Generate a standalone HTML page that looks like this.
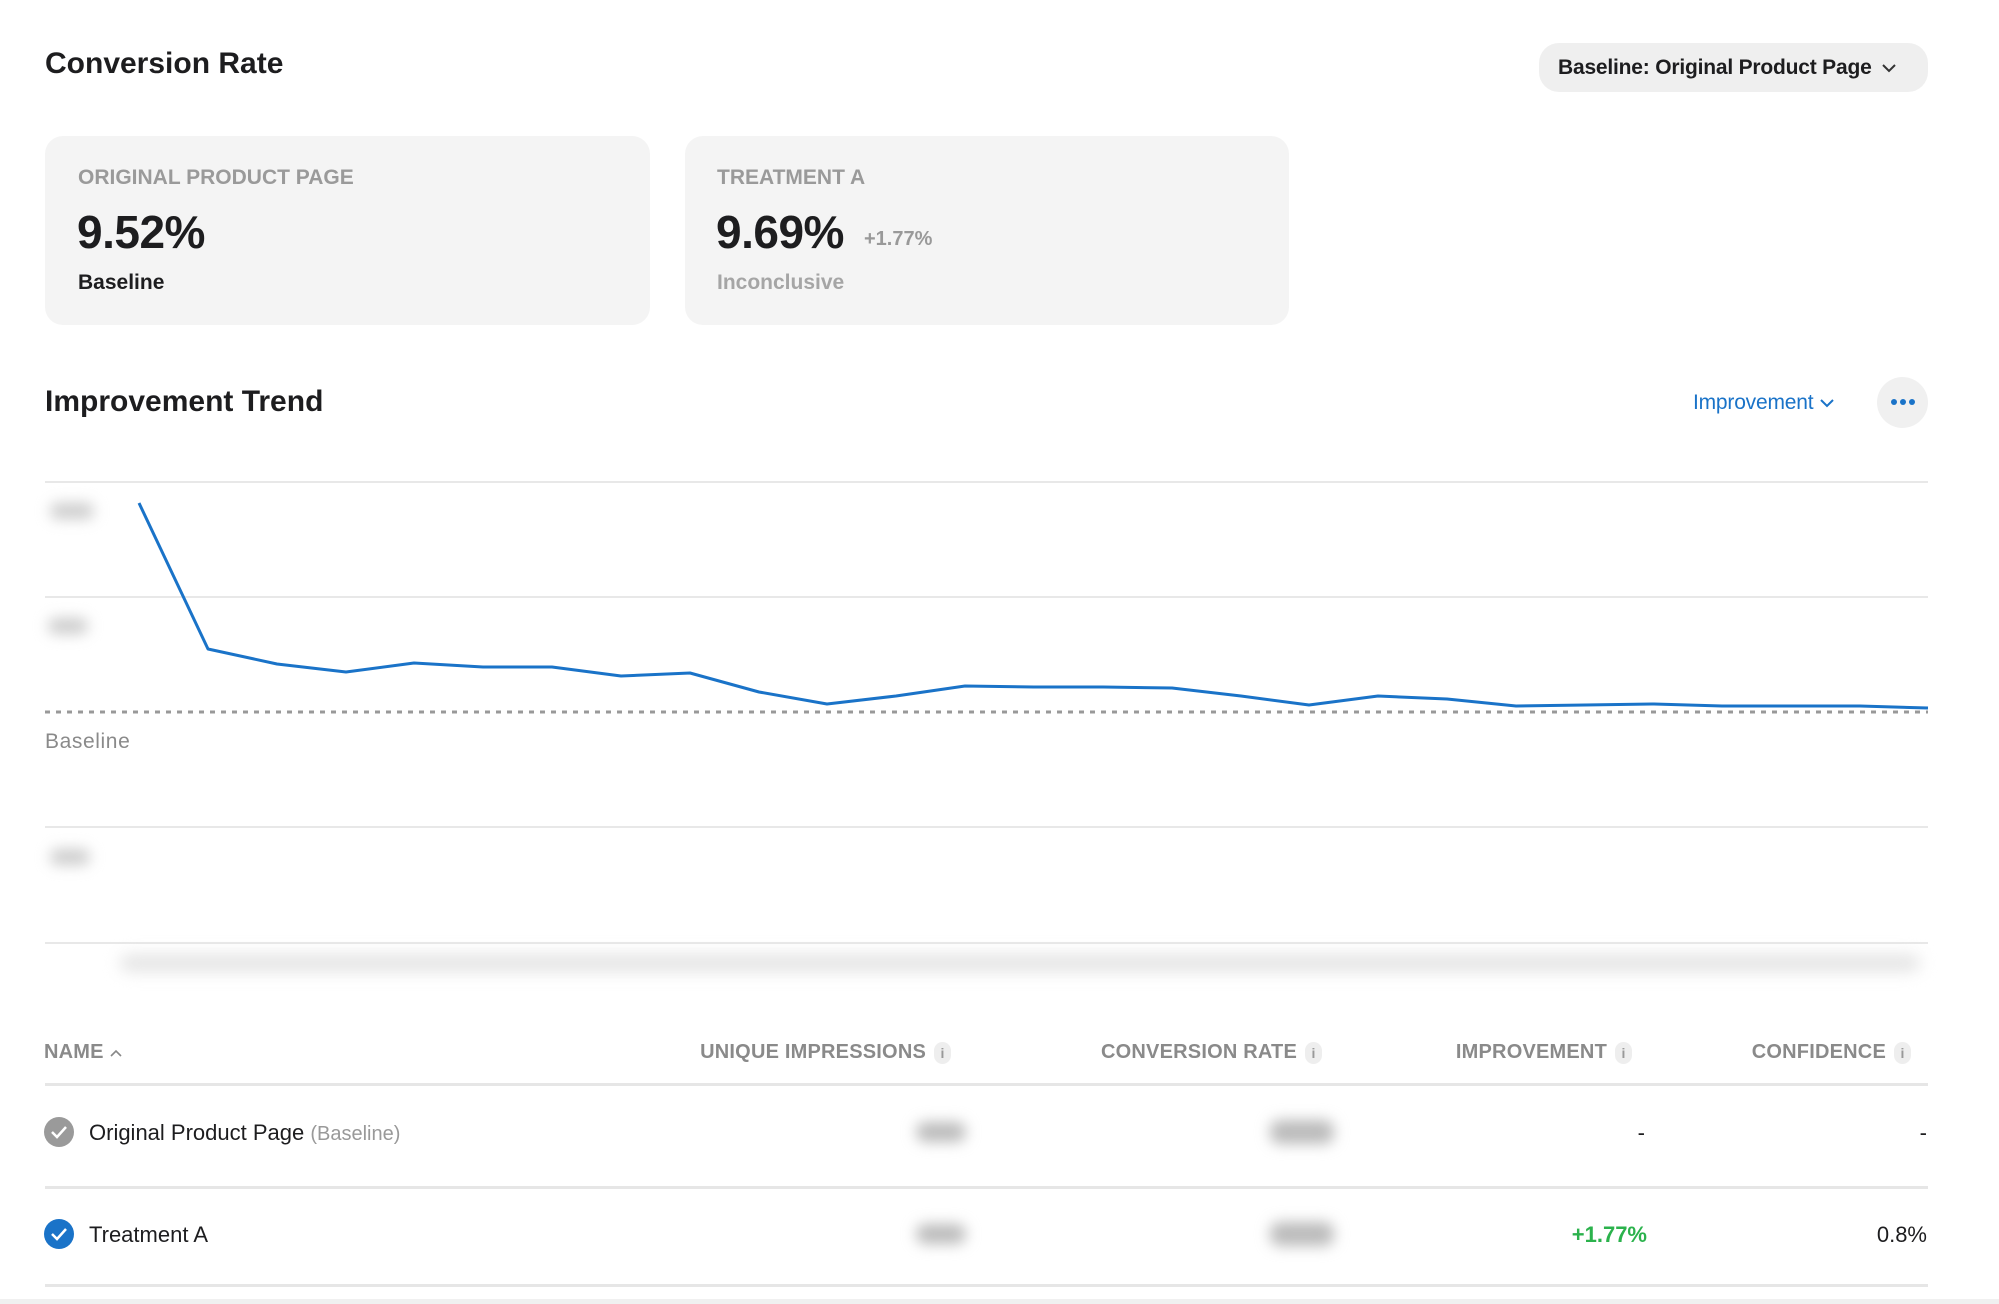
<!DOCTYPE html>
<html><head><meta charset="utf-8"><style>
*{margin:0;padding:0;box-sizing:border-box}
body{width:1999px;height:1304px;background:#fff;font-family:"Liberation Sans",Arial,sans-serif;position:relative;overflow:hidden;color:#1d1d1f}
.a{position:absolute;white-space:nowrap}
.h{font-size:30px;font-weight:bold;letter-spacing:0px}
.card{position:absolute;top:136px;height:189px;background:#f4f4f4;border-radius:18px}
.lbl{font-size:21px;font-weight:bold;color:#9a9a9a;letter-spacing:0px}
.big{font-size:46px;font-weight:bold;letter-spacing:-0.5px}
.th{font-size:20px;font-weight:bold;color:#8a8a8a;letter-spacing:0.2px;top:1041px}
.info{display:inline-block;width:17px;height:22px;border-radius:9px;background:#eee;color:#999;font-size:14px;text-align:center;line-height:22px;margin-left:8px;vertical-align:middle}
.blur{position:absolute;background:#bbb;filter:blur(7px);border-radius:10px}
.row{font-size:22px;letter-spacing:0px}
.hr{position:absolute;left:45px;width:1883px;height:2px;background:#e6e6e6}
</style></head><body>
<div class="a h" style="left:45px;top:47px">Conversion Rate</div>
<div class="a" style="left:1539px;top:43px;width:389px;height:49px;border-radius:20px;background:#efefef;font-size:21px;font-weight:bold;line-height:49px;padding-left:19px;letter-spacing:-0.2px">Baseline: Original Product Page <svg width="16" height="12" viewBox="0 0 16 12" style="margin-left:4px"><path d="M2 3l6 6 6-6" stroke="#333" stroke-width="2" fill="none"/></svg></div>

<div class="card" style="left:45px;width:605px"></div>
<div class="card" style="left:685px;width:604px"></div>
<div class="a lbl" style="left:78px;top:166px">ORIGINAL PRODUCT PAGE</div>
<div class="a big" style="left:77px;top:205px">9.52%</div>
<div class="a" style="left:78px;top:271px;font-size:21px;font-weight:bold">Baseline</div>
<div class="a lbl" style="left:717px;top:166px">TREATMENT A</div>
<div class="a big" style="left:716px;top:205px">9.69%</div>
<div class="a" style="left:864px;top:228px;font-size:20px;font-weight:bold;color:#999">+1.77%</div>
<div class="a" style="left:717px;top:271px;font-size:21px;font-weight:bold;color:#a5a5a5">Inconclusive</div>

<div class="a h" style="left:45px;top:385px">Improvement Trend</div>
<div class="a" style="left:1693px;top:391px;font-size:21px;color:#1a73c8;letter-spacing:-0.2px">Improvement <svg width="16" height="12" viewBox="0 0 16 12"><path d="M2 3l6 6 6-6" stroke="#1a73c8" stroke-width="2" fill="none"/></svg></div>
<div class="a" style="left:1877px;top:377px;width:51px;height:51px;border-radius:50%;background:#f0f0f0"></div>
<svg class="a" style="left:1890px;top:398px" width="26" height="8"><circle cx="4" cy="4" r="3" fill="#1a73c8"/><circle cx="13" cy="4" r="3" fill="#1a73c8"/><circle cx="22" cy="4" r="3" fill="#1a73c8"/></svg>

<svg class="a" style="left:0;top:0" width="1999" height="1000">
<g stroke="#e8e8e8" stroke-width="2"><line x1="45" y1="482" x2="1928" y2="482"/><line x1="45" y1="597" x2="1928" y2="597"/><line x1="45" y1="827" x2="1928" y2="827"/><line x1="45" y1="943" x2="1928" y2="943"/></g>
<line x1="45" y1="712" x2="1928" y2="712" stroke="#999" stroke-width="3" stroke-dasharray="5 6"/>
<polyline fill="none" stroke="#1a73c8" stroke-width="3" stroke-linejoin="round" points="139,503 208,649 277,664 346,672 414,663 483,667 552,667 621,676 690,673 759,692 827,704 896,696 965,686 1034,687 1103,687 1172,688 1241,696 1309,705 1378,696 1447,699 1516,706 1585,705 1654,704 1722,706 1791,706 1860,706 1928,708"/>
</svg>
<div class="a" style="left:45px;top:730px;font-size:21px;color:#8a8a8a;letter-spacing:0.6px">Baseline</div>
<div class="blur" style="left:50px;top:503px;width:44px;height:16px;background:#ccc"></div>
<div class="blur" style="left:48px;top:618px;width:40px;height:16px;background:#ccc"></div>
<div class="blur" style="left:50px;top:849px;width:40px;height:16px;background:#ccc"></div>
<div class="blur" style="left:120px;top:955px;width:1800px;height:16px;background:#e2e2e2;filter:blur(8px)"></div>

<div class="a th" style="left:44px">NAME <svg width="14" height="10" viewBox="0 0 14 10"><path d="M2 8l5-5 5 5" stroke="#888" stroke-width="1.6" fill="none"/></svg></div>
<div class="a th" style="right:1048px">UNIQUE IMPRESSIONS<span class="info">i</span></div>
<div class="a th" style="right:677px">CONVERSION RATE<span class="info">i</span></div>
<div class="a th" style="right:367px">IMPROVEMENT<span class="info">i</span></div>
<div class="a th" style="right:88px">CONFIDENCE<span class="info">i</span></div>
<div class="hr" style="top:1083px;height:3px"></div>

<svg class="a" style="left:44px;top:1117px" width="30" height="30"><circle cx="15" cy="15" r="15" fill="#9a9a9a"/><path d="M8 15l5 5 9-10" stroke="#fff" stroke-width="2.5" fill="none"/></svg>
<div class="a row" style="left:89px;top:1120px">Original Product Page <span style="color:#999;font-size:20px">(Baseline)</span></div>
<div class="blur" style="left:916px;top:1122px;width:50px;height:20px"></div>
<div class="blur" style="left:1270px;top:1120px;width:64px;height:24px"></div>
<div class="a row" style="right:354px;top:1120px">-</div>
<div class="a row" style="right:72px;top:1120px">-</div>
<div class="hr" style="top:1186px;height:3px"></div>

<svg class="a" style="left:44px;top:1219px" width="30" height="30"><circle cx="15" cy="15" r="15" fill="#1a73c8"/><path d="M8 15l5 5 9-10" stroke="#fff" stroke-width="2.5" fill="none"/></svg>
<div class="a row" style="left:89px;top:1222px">Treatment A</div>
<div class="blur" style="left:916px;top:1224px;width:50px;height:20px"></div>
<div class="blur" style="left:1270px;top:1222px;width:64px;height:24px"></div>
<div class="a row" style="right:352px;top:1222px;color:#2bb24c;font-weight:bold">+1.77%</div>
<div class="a row" style="right:72px;top:1222px">0.8%</div>
<div class="hr" style="top:1284px;height:3px"></div>
<div class="a" style="left:0;top:1299px;width:1999px;height:5px;background:#f0f0f0"></div>
</body></html>
